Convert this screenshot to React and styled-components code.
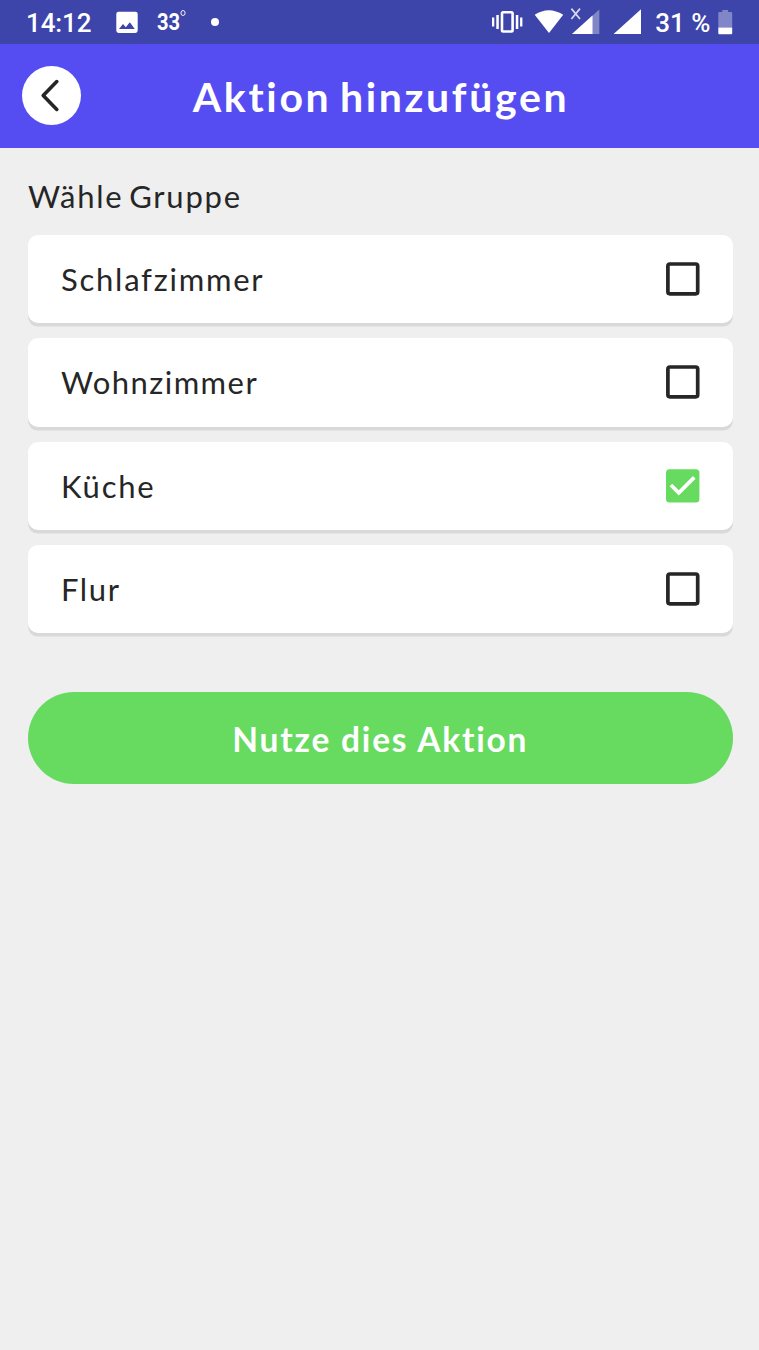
import React, { useState } from "react";
import styled, { createGlobalStyle } from "styled-components";

const GlobalStyle = createGlobalStyle`
  * { box-sizing: border-box; }
  body { margin: 0; background: #efefef; }
`;

const Screen = styled.div`
  min-height: 1350px;
  background: #efefef;
  color: #262626;
  font-family: Lato, "Open Sans", sans-serif;
`;

const StatusBar = styled.div`
  display: flex;
  align-items: center;
  justify-content: space-between;
  height: 44px;
  padding: 0 26px 0 26px;
  background: #3d45aa;
  color: #fff;
  font: 500 26px/44px Roboto, sans-serif;
`;

const StatusGroup = styled.div`
  display: flex;
  height: 44px;
`;

const Clock = styled.span`
  width: 90px;
  padding-top: 1px;
  letter-spacing: -0.1px;
`;

const Temperature = styled.span`
  display: flex;
  width: 53px;
  margin-left: 19px;
  font-size: 24px;
  font-weight: 700;
  transform: scaleX(0.84);
  transform-origin: left;
`;

const Degree = styled.span`
  width: 6px;
  height: 6px;
  margin: 10px 0 0 0;
  border: 1.3px solid #fff;
  border-radius: 50%;
`;

const Dot = styled.span`
  width: 8px;
  height: 8px;
  margin: 18px 0 0 1px;
  border-radius: 50%;
  background: #fff;
`;

const Battery = styled.span`
  padding-top: 1px;
  margin: 0 7.5px 0 13.5px;
  white-space: pre;
`;

const Header = styled.header`
  display: grid;
  grid-template-columns: 59px 1fr 59px;
  align-items: center;
  height: 103.6px;
  padding: 0 22px;
  background: #554df2;
`;

const BackButton = styled.button`
  display: flex;
  width: 59px;
  height: 59px;
  padding: 0;
  border: 0;
  border-radius: 50%;
  background: #fff;
`;

const Title = styled.h1`
  margin: 0;
  padding: 3px 0 0 3px;
  color: #fff;
  font-size: 41px;
  font-weight: 700;
  line-height: 60px;
  letter-spacing: 2.65px;
  word-spacing: -4px;
  text-align: center;
  white-space: nowrap;
`;

const Content = styled.main`
  padding: 28.4px 26.5px 0 28px;
`;

const Label = styled.h2`
  margin: 0 0 18.9px;
  font-size: 31px;
  font-weight: 400;
  line-height: 40px;
  letter-spacing: 1.75px;
  word-spacing: -4px;
`;

const Options = styled.div`
  display: flex;
  flex-direction: column;
  gap: 15px;
`;

const Option = styled.label`
  display: flex;
  align-items: center;
  justify-content: space-between;
  height: 88.4px;
  padding: 0 32.8px 0 33px;
  border-radius: 10px;
  background: #fff;
  box-shadow: 0 3.6px 0 #d9d9d9;
`;

const OptionName = styled.span`
  font-size: 31px;
  line-height: 40px;
  letter-spacing: ${(p) => p.$spacing}px;
`;

const HiddenInput = styled.input`
  appearance: none;
  width: 0;
  height: 0;
  margin: 0 0 0 auto;
`;

const SubmitButton = styled.button`
  display: block;
  width: 100%;
  height: 92px;
  margin-top: 59px;
  padding: 2px 0 0;
  border: 0;
  border-radius: 46px;
  background: #67da60;
  color: #fff;
  font: 700 33.5px/90px Lato, sans-serif;
  letter-spacing: 1.8px;
`;

const Icon = styled.svg`
  display: block;
  flex: none;
`;

function CheckMark({ checked }) {
  return (
    <Icon width="34" height="34" viewBox="0 0 34 34" fill="none">
      {checked ? (
        <>
          <rect x="0" y="0.2" width="33.4" height="33.4" rx="3.5" fill="#67da60" />
          <path d="M4.9 16 12.8 23.9 28.3 8.4" stroke="#fff" strokeWidth="3.7" />
        </>
      ) : (
        <rect x="1.9" y="2" width="29.8" height="29.8" rx="2" stroke="#262626" strokeWidth="3.7" />
      )}
    </Icon>
  );
}

function PictureIcon() {
  return (
    <Icon width="22" height="44" viewBox="0 0 22 44">
      <path fill="#fff" fillRule="evenodd" d="M2.6 11.7H19.4Q21.7 11.7 21.7 14V30.6Q21.7 32.9 19.4 32.9H2.6Q.3 32.9.3 30.6V14Q.3 11.7 2.6 11.7ZM3 29H18.8L13.8 22.2 9.8 27.2 7 23.9Z" />
    </Icon>
  );
}

function StatusIcons() {
  return (
    <Icon width="150" height="44" viewBox="492 0 150 44" fill="#fff">
      <rect x="502" y="12.3" width="10.6" height="19.2" rx="1.2" fill="none" stroke="#fff" strokeWidth="2.6" />
      <path d="M492 17.5h2.3v9H492zM496.3 15h2.5v14h-2.5zM515.8 15h2.5v14h-2.5zM520.1 17.5h2.3v9h-2.3z" />
      <path d="M534.7 14.8Q548.8 5.5 563.2 14.8L549 33Z" />
      <path d="M571.4 8.6 580 19M580 8.6 571.4 19" stroke="#d8daee" strokeWidth="1.7" />
      <path d="M599.3 9.5V34H572Z" opacity=".35" />
      <path d="M592.5 15.6V34H572Z" />
      <path d="M641 9.3V34H613.6Z" />
    </Icon>
  );
}

function BatteryIcon() {
  return (
    <Icon width="15" height="44" viewBox="0 0 15 44" fill="#fff">
      <path d="M4.3 10h5.8v2h2.8q1.3 0 1.3 1.3V27.5H.3V13.3Q.3 12 1.6 12h2.7z" opacity=".35" />
      <path d="M.3 27.5h13.9v5.7q0 1-1 1H1.3q-1 0-1-1z" />
    </Icon>
  );
}

const groups = [
  { name: "Schlafzimmer", spacing: 1.75 },
  { name: "Wohnzimmer", spacing: 1.45 },
  { name: "Küche", spacing: 1.8 },
  { name: "Flur", spacing: 1.6 },
];

export default function App() {
  const [selected, setSelected] = useState("Küche");
  return (
    <Screen>
      <GlobalStyle />
      <StatusBar>
        <StatusGroup>
          <Clock>14:12</Clock>
          <PictureIcon />
          <Temperature>33<Degree /></Temperature>
          <Dot />
        </StatusGroup>
        <StatusGroup>
          <StatusIcons />
          <Battery>31 %</Battery>
          <BatteryIcon />
        </StatusGroup>
      </StatusBar>
      <Header>
        <BackButton aria-label="Zurück">
          <Icon width="59" height="59" viewBox="0 0 59 59" fill="none">
            <path d="M34.8 15.6 21.2 29.5 34.8 43.4" stroke="#262626" strokeWidth="3.6" strokeLinecap="round" strokeLinejoin="round" />
          </Icon>
        </BackButton>
        <Title>Aktion hinzufügen</Title>
      </Header>
      <Content>
        <Label>Wähle Gruppe</Label>
        <Options>
          {groups.map(({ name, spacing }) => (
            <Option key={name}>
              <OptionName $spacing={spacing}>{name}</OptionName>
              <HiddenInput
                type="checkbox"
                checked={selected === name}
                onChange={() => setSelected(name)}
              />
              <CheckMark checked={selected === name} />
            </Option>
          ))}
        </Options>
        <SubmitButton>Nutze dies Aktion</SubmitButton>
      </Content>
    </Screen>
  );
}
